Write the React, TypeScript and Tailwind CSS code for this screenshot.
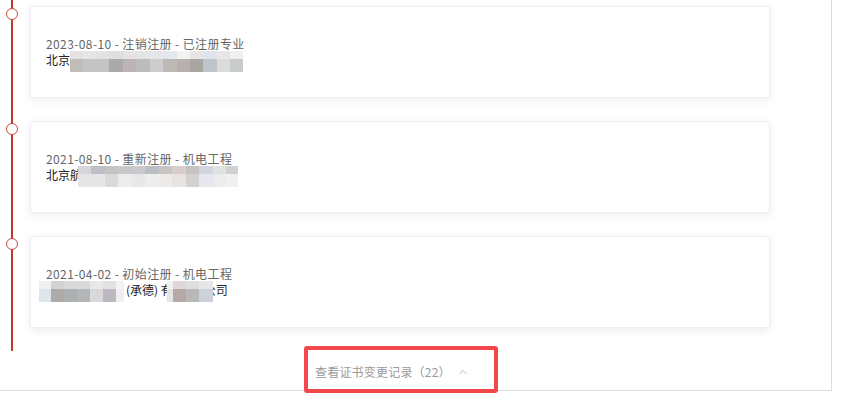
import { ChevronUp } from "lucide-react";

type Block = { w: number; top: string; bottom: string };

// pixelated mosaic used to hide part of the company name
const Mosaic = ({ blocks, className = "" }: { blocks: Block[]; className?: string }) => (
  <span className={`inline-flex align-middle blur-[0.6px] ${className}`}>
    {blocks.map((b, i) => (
      <span key={i} className="flex flex-col" style={{ width: b.w }}>
        <span className="h-[8px]" style={{ background: b.top }} />
        <span className="h-[13px]" style={{ background: b.bottom }} />
      </span>
    ))}
  </span>
);

const mosaicA: Block[] = [
  { w: 13, top: "#e4e2e2", bottom: "#c2bcb8" },
  { w: 13, top: "#e6e6e6", bottom: "#c4c4c4" },
  { w: 13, top: "#e2e2e2", bottom: "#c4c4c4" },
  { w: 14, top: "#e0e0e0", bottom: "#aaaaaa" },
  { w: 13, top: "#e4e2e4", bottom: "#bcb4b6" },
  { w: 14, top: "#e4e4e4", bottom: "#bcbcbc" },
  { w: 13, top: "#e6e6ea", bottom: "#cfccd0" },
  { w: 14, top: "#e4e8ec", bottom: "#bdbab6" },
  { w: 13, top: "#f4f2f0", bottom: "#b8b0ae" },
  { w: 13, top: "#e6e4e4", bottom: "#a9a6a2" },
  { w: 14, top: "#e0e4ea", bottom: "#bec6cc" },
  { w: 13, top: "#e8e6e6", bottom: "#dcdcdc" },
  { w: 13, top: "#f0f0f0", bottom: "#c8cccc" },
];

const mosaicB: Block[] = [
  { w: 13, top: "#d4d6da", bottom: "#e8e6e4" },
  { w: 14, top: "#bcc0c4", bottom: "#e6e6e6" },
  { w: 13, top: "#c4c4c4", bottom: "#dcdad6" },
  { w: 14, top: "#c8c8cc", bottom: "#ececec" },
  { w: 13, top: "#cacacc", bottom: "#e8e8ea" },
  { w: 14, top: "#bcbec6", bottom: "#eeeeee" },
  { w: 13, top: "#c8c4c4", bottom: "#ecebea" },
  { w: 14, top: "#d8cccc", bottom: "#e8e4e4" },
  { w: 13, top: "#c6c4c0", bottom: "#d4d2d0" },
  { w: 14, top: "#d2d6dc", bottom: "#e6e8ee" },
  { w: 13, top: "#e0e2e2", bottom: "#ececec" },
  { w: 12, top: "#d0d2d2", bottom: "#f0f0f0" },
];

const mosaicC: Block[] = [
  { w: 12, top: "#eef0f2", bottom: "#dfe6ea" },
  { w: 13, top: "#d4d2d0", bottom: "#aeaaa8" },
  { w: 13, top: "#d8dada", bottom: "#acb0b0" },
  { w: 13, top: "#d8dadc", bottom: "#b2b6b8" },
  { w: 13, top: "#e8e8e8", bottom: "#d8d8d8" },
  { w: 13, top: "#e4e0e4", bottom: "#bdb8bf" },
  { w: 8, top: "#f4f2f2", bottom: "#f0eeee" },
];

const mosaicD: Block[] = [
  { w: 6, top: "#f2f2f2", bottom: "#e4e4e4" },
  { w: 13, top: "#e0d8d8", bottom: "#b8a8a8" },
  { w: 13, top: "#dedede", bottom: "#b8b8b8" },
  { w: 14, top: "#e4e6ea", bottom: "#cdd1da" },
];

const records = [
  {
    title: "2023-08-10 - 注销注册 - 已注册专业",
    body: (
      <>
        北京
        <Mosaic blocks={mosaicA} className="mt-[2px]" />
      </>
    ),
  },
  {
    title: "2021-08-10 - 重新注册 - 机电工程",
    body: (
      <>
        北京航
        <Mosaic blocks={mosaicB} className="-ml-[4px] mt-[2px]" />
      </>
    ),
  },
  {
    title: "2021-04-02 - 初始注册 - 机电工程",
    body: (
      <>
        <Mosaic blocks={mosaicC} className="-ml-[7px] mt-[2px]" />
        <span className="ml-[2px]">(承德) 有</span>
        <Mosaic blocks={mosaicD} className="-ml-[6px] mt-[2px]" />
        <span className="-ml-[9px]">公司</span>
      </>
    ),
  },
];

const App = () => {
  return (
    <div
      className="relative w-[852px] h-[408px] overflow-hidden bg-white"
      style={{ fontFamily: '"Noto Sans CJK SC", "Microsoft YaHei", sans-serif' }}
    >
      <div className="w-[832px] h-[391px] border-r border-b border-[#dcdcdc] flex flex-col">
        {/* timeline */}
        <div className="ml-[11px] border-l-2 border-[#c0392b] pt-[6px]">
          {records.map((r, i) => (
            <div key={i} className="relative pb-[23px]">
              <span className="absolute -left-[7px] top-[2px] w-[12px] h-[12px] rounded-full border-[1.5px] border-[#c8473a] bg-white" />
              <div className="ml-[17px] w-[740px] h-[92px] rounded-[3px] border border-[#eeeef5] bg-white shadow-[0_2px_8px_rgba(90,90,140,0.12)] px-[15px] pt-[29px] text-[12px] leading-[16px]">
                <div className="text-[#666666] tracking-[0.4px]">{r.title}</div>
                <div className="flex items-center h-[16px] text-[#222222] whitespace-nowrap">{r.body}</div>
              </div>
            </div>
          ))}
        </div>

        {/* footer toggle */}
        <div className="flex-1 flex items-center pl-[315px]">
          <button className="flex items-center text-[12px] text-[#9a9a9a] tracking-[0.2px] gap-[6px] mt-[2px]">
            <span>查看证书变更记录（22）</span>
            <ChevronUp size={12} strokeWidth={1.5} />
          </button>
        </div>
      </div>

      {/* highlight annotation */}
      <div className="absolute left-[304px] top-[346px] w-[194px] h-[47px] rounded-[3px] border-[4px] border-[#f2484b]" />
    </div>
  );
};

export default App;
